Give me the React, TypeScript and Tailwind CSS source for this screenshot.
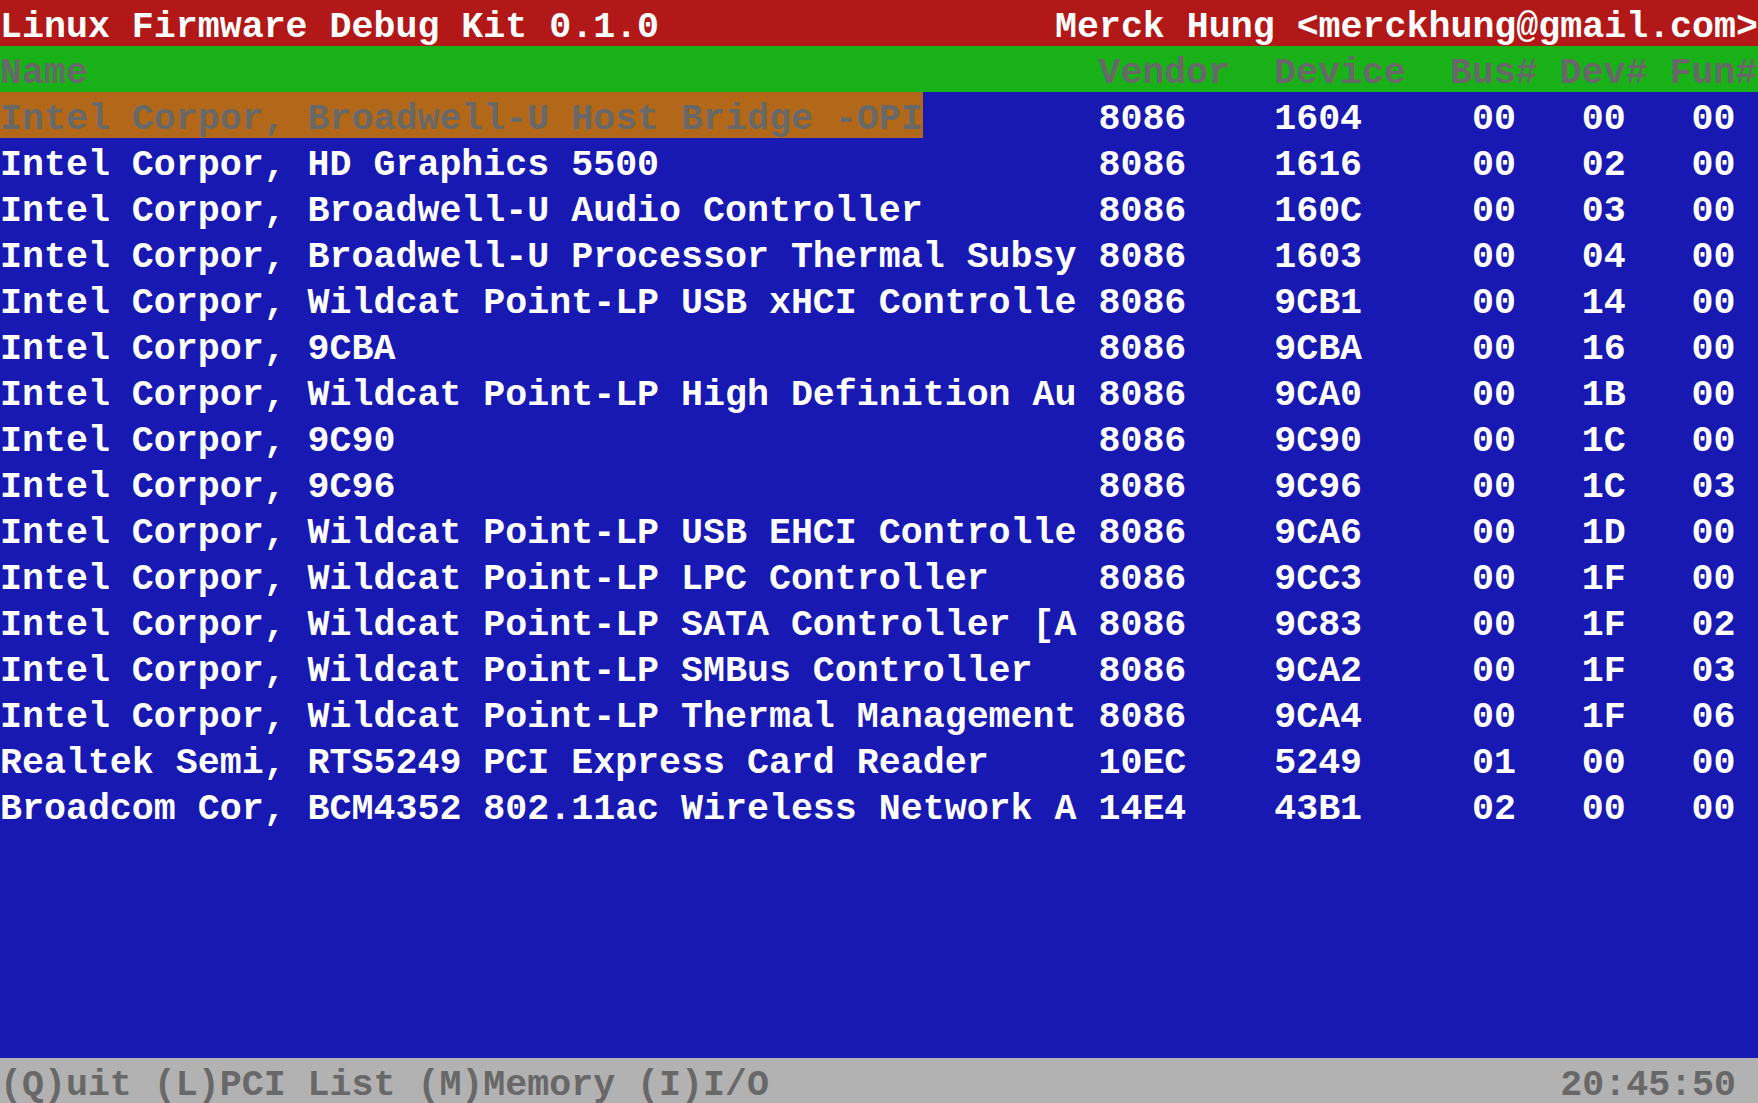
import React from "react";

const rows: [string, string, string, string, string, string][] = [
  ["Intel Corpor, Broadwell-U Host Bridge -OPI", "8086", "1604", "00", "00", "00"],
  ["Intel Corpor, HD Graphics 5500", "8086", "1616", "00", "02", "00"],
  ["Intel Corpor, Broadwell-U Audio Controller", "8086", "160C", "00", "03", "00"],
  ["Intel Corpor, Broadwell-U Processor Thermal Subsy", "8086", "1603", "00", "04", "00"],
  ["Intel Corpor, Wildcat Point-LP USB xHCI Controlle", "8086", "9CB1", "00", "14", "00"],
  ["Intel Corpor, 9CBA", "8086", "9CBA", "00", "16", "00"],
  ["Intel Corpor, Wildcat Point-LP High Definition Au", "8086", "9CA0", "00", "1B", "00"],
  ["Intel Corpor, 9C90", "8086", "9C90", "00", "1C", "00"],
  ["Intel Corpor, 9C96", "8086", "9C96", "00", "1C", "03"],
  ["Intel Corpor, Wildcat Point-LP USB EHCI Controlle", "8086", "9CA6", "00", "1D", "00"],
  ["Intel Corpor, Wildcat Point-LP LPC Controller", "8086", "9CC3", "00", "1F", "00"],
  ["Intel Corpor, Wildcat Point-LP SATA Controller [A", "8086", "9C83", "00", "1F", "02"],
  ["Intel Corpor, Wildcat Point-LP SMBus Controller", "8086", "9CA2", "00", "1F", "03"],
  ["Intel Corpor, Wildcat Point-LP Thermal Management", "8086", "9CA4", "00", "1F", "06"],
  ["Realtek Semi, RTS5249 PCI Express Card Reader", "10EC", "5249", "01", "00", "00"],
  ["Broadcom Cor, BCM4352 802.11ac Wireless Network A", "14E4", "43B1", "02", "00", "00"],
];

function Row({
  cells,
  selected,
  className,
}: {
  cells: [string, string, string, string, string, string];
  selected?: boolean;
  className?: string;
}) {
  return (
    <div className={"flex h-[46px] shrink-0 whitespace-pre " + (className ?? "")}>
      <span className="w-[50ch] shrink-0">
        <span
          className={
            "inline-block h-[46px] pt-[10px] align-top leading-[36px] " +
            (selected ? "bg-[#B26818] text-[#686868]" : "")
          }
        >
          {cells[0]}
        </span>
      </span>
      <span className="w-[8ch] shrink-0 pt-[10px] leading-[36px]">{cells[1]}</span>
      <span className="w-[8ch] shrink-0 pt-[10px] leading-[36px]">{cells[2]}</span>
      <span className="w-[5ch] shrink-0 pt-[10px] leading-[36px]">{cells[3]}</span>
      <span className="w-[5ch] shrink-0 pt-[10px] leading-[36px]">{cells[4]}</span>
      <span className="w-[4ch] shrink-0 pt-[10px] leading-[36px]">{cells[5]}</span>
    </div>
  );
}

export default function App() {
  return (
    <div
      className="flex h-[1103px] w-[1758px] flex-col overflow-hidden bg-[#1818B2] text-[36.62px] font-bold text-white"
      style={{ fontFamily: '"Liberation Mono", "Courier New", monospace' }}
    >
      <div className="flex h-[46px] shrink-0 justify-between whitespace-pre bg-[#B21818] pt-[10px] leading-[36px] text-white">
        <span>Linux Firmware Debug Kit 0.1.0</span>
        <span>Merck Hung &lt;merckhung@gmail.com&gt;</span>
      </div>
      <Row
        cells={["Name", "Vendor", "Device", "Bus#", "Dev#", "Fun#"]}
        className="bg-[#18B218] text-[#686868]"
      />
      {rows.map((r, i) => (
        <Row
          key={i}
          cells={[r[0], r[1], r[2], " " + r[3], " " + r[4], " " + r[5]]}
          selected={i === 0}
        />
      ))}
      <div className="flex-1" />
      <div className="flex h-[45px] shrink-0 justify-between whitespace-pre bg-[#B2B2B2] pr-[1ch] pt-[10px] leading-[35px] text-[#686868]">
        <span>(Q)uit (L)PCI List (M)Memory (I)I/O</span>
        <span>20:45:50</span>
      </div>
    </div>
  );
}
